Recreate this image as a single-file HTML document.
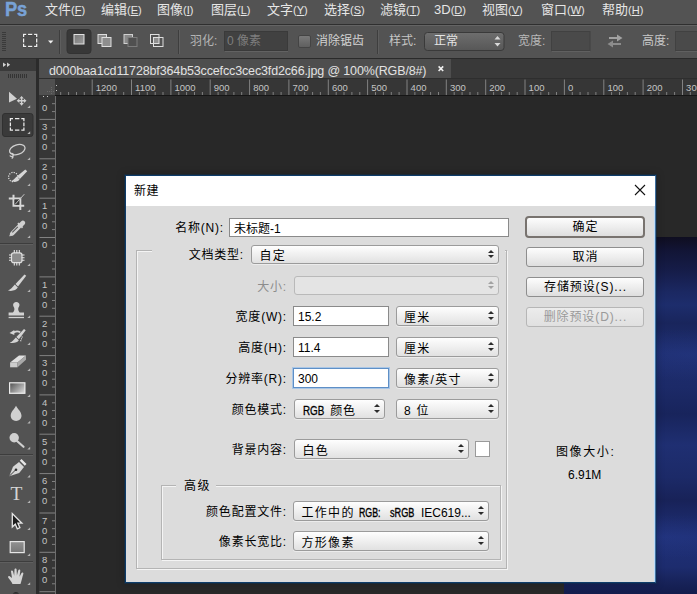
<!DOCTYPE html>
<html lang="zh-CN">
<head>
<meta charset="utf-8">
<title>新建</title>
<style>
*{box-sizing:border-box;margin:0;padding:0}
html,body{width:697px;height:594px;overflow:hidden;background:#282828}
body{position:relative;font-family:"Liberation Sans","Noto Sans CJK SC",sans-serif;font-size:12px;color:#000}
.a{position:absolute;white-space:nowrap}
/* app chrome */
#menubar{left:0;top:0;width:697px;height:24px;background:#535353}
#menubar .m{top:0.500px;font-size:13px;line-height:17px;color:#e6e6e6}
#menubar u{text-decoration:underline;text-underline-offset:1px}
#menubar .m span{font-size:11px}
#ps{left:5px;top:-3.500px;font-size:21px;font-weight:bold;color:#78a2d6;letter-spacing:-0.300px;line-height:24px;-webkit-text-stroke:0.500px #78a2d6;transform:scaleX(.87);transform-origin:0 50%}
#optbar{left:0;top:24px;width:697px;height:35px;background:#535353;border-top:1px solid #2f2f2f;border-bottom:1px solid #2c2c2c;box-shadow:inset 0 1px 0 #646464}
.ol{font-size:12px;color:#9a9a9a;line-height:16px;top:33px}
#tabbar{left:36px;top:58px;width:661px;height:21px;background:#393939;border-top:1px solid #2a2a2a}
#tab{left:39px;top:59px;width:412px;height:19px;background:#4e4e4e;color:#e2e2e2;font-size:12.500px;letter-spacing:-0.140px;line-height:19px;padding-left:10px;padding-top:2.500px;overflow:hidden}
#tools{left:0;top:59px;width:36px;height:535px;background:#535353}
#toolhd{left:0;top:59px;width:36px;height:12px;background:#3a3a3a}
#hruler{left:39px;top:78px;width:658px;height:17px;background:#363636;border-top:1px solid #2e2e2e}
#vruler{left:39px;top:95px;width:17px;height:499px;background:#363636}
#corner{left:39px;top:79px;width:16px;height:16px;background:#505050}
.rl{font-size:9.5px;color:#bdbdbd;line-height:10px}
/* dialog */
#dlg{left:125px;top:175px;width:531px;height:408px;background:#dcdcdc;border:1px solid #0e3c69;border-right-color:#41709f;box-shadow:0 0 0 1px rgba(14,50,84,.45),0 0 7px 2px rgba(0,0,0,.16)}
#dlg::after{content:"";position:absolute;right:0;top:0;width:1px;height:100%;background:#bcdcfa}
#title{left:126px;top:176px;width:529px;height:30px;background:#fff}
.lbl{font-size:12px;line-height:16px;letter-spacing:0.800px;text-align:right;color:#000}
.inp{background:#fff;border:1px solid #8a8a8a;font-size:12px;line-height:21px;padding-left:4px}
.foc{border:1px solid #5e8fc6;box-shadow:0 0 0 1px #a9c6e6}
.sel{border:1px solid #9b9b9b;border-radius:3px;background:linear-gradient(#fefefe,#e1e1e1);box-shadow:0 1px 0 #ececec;font-size:12px;line-height:20px;padding-top:1px;padding-left:7.500px;letter-spacing:1.300px}
.sel::before,.sel::after{content:"";position:absolute;right:3.700px;border-left:3px solid transparent;border-right:3px solid transparent}
.sel::before{top:4px;border-bottom:3.200px solid #2c2c2c}
.sel::after{top:9.500px;border-top:3.200px solid #2c2c2c}
.sel.h19{line-height:19px}
.sel.h19::before{top:3.500px}.sel.h19::after{top:9px}
.sel.dis{background:#e4e4e4;border-color:#b9b9b9;box-shadow:none}
.sel.dis::before{border-bottom-color:#a2a2a2}.sel.dis::after{border-top-color:#a2a2a2}
.nr{display:inline-block;vertical-align:top;letter-spacing:0}
.nr>span{display:inline-block;transform-origin:0 50%;white-space:nowrap}
.btn.def{left:525px;width:120px;height:22px;border:2px solid #78736f;border-radius:4px;line-height:18px}
.btn{border:1px solid #8e8e8e;border-radius:3px;background:linear-gradient(#fdfdfd,#dedede);font-size:12px;line-height:18px;text-align:center;letter-spacing:0.900px;text-indent:1px;left:526px;width:118px;height:20px}
</style>
</head>
<body>
<div class="a" id="canvasimg" style="left:564px;top:237px;width:133px;height:357px;background:
radial-gradient(ellipse 90px 26px at 125px 118px,rgba(40,60,140,.35),rgba(40,60,140,0) 100%),
radial-gradient(ellipse 90px 22px at 100px 300px,rgba(40,60,140,.3),rgba(40,60,140,0) 100%),
linear-gradient(#0f0e20 0,#121536 14px,#161d4a 35px,#1b2862 55px,#1d2d6c 68px,#19255c 86px,#1e2e70 116px,#1c2a68 150px,#18245c 177px,#1f2f72 208px,#1c2a68 240px,#182258 263px,#1f3078 300px,#1d2c6e 330px,#172258 346px,#131c4c 357px)"></div>

<div class="a" id="menubar">
 <div class="a" id="ps">Ps</div>
 <div class="a m" style="left:45px">文件<span>(<u>F</u>)</span></div>
 <div class="a m" style="left:101px">编辑<span>(<u>E</u>)</span></div>
 <div class="a m" style="left:157px">图像<span>(<u>I</u>)</span></div>
 <div class="a m" style="left:211px">图层<span>(<u>L</u>)</span></div>
 <div class="a m" style="left:267px">文字<span>(<u>Y</u>)</span></div>
 <div class="a m" style="left:324px">选择<span>(<u>S</u>)</span></div>
 <div class="a m" style="left:380px">滤镜<span>(<u>T</u>)</span></div>
 <div class="a m" style="left:434px">3D<span>(<u>D</u>)</span></div>
 <div class="a m" style="left:482px">视图<span>(<u>V</u>)</span></div>
 <div class="a m" style="left:541px">窗口<span>(<u>W</u>)</span></div>
 <div class="a m" style="left:602px">帮助<span>(<u>H</u>)</span></div>
</div>

<div class="a" id="optbar"></div>
<!-- options bar -->
<svg class="a" style="left:0;top:24px" width="697" height="34" viewBox="0 24 697 34">
 <g stroke="#3a3a3a" stroke-width="1">
  <path d="M2 32.5h4M2 34.5h4M2 36.5h4M2 38.5h4M2 40.5h4M2 42.5h4M2 44.5h4M2 46.5h4M2 48.5h4M2 50.5h4"/>
 </g>
 <rect x="23.600" y="34.400" width="13.100" height="12" fill="#4d4d4d"/><path d="M22.95 34.4H26.20M28.05 34.4H32.25M34.10 34.4H37.35M22.95 46.4H26.20M28.05 46.4H32.25M34.10 46.4H37.35M23.6 34.4V37.00M23.6 38.40V42.40M23.6 43.80V46.4M36.7 34.4V37.00M36.7 38.40V42.40M36.7 43.80V46.4" stroke="#2e2e2e" stroke-width="2.600" fill="none" opacity=".35"/><path d="M22.95 34.4H26.20M28.05 34.4H32.25M34.10 34.4H37.35M22.95 46.4H26.20M28.05 46.4H32.25M34.10 46.4H37.35M23.6 34.4V37.00M23.6 38.40V42.40M23.6 43.80V46.4M36.7 34.4V37.00M36.7 38.40V42.40M36.7 43.80V46.4" stroke="#efefef" stroke-width="1.300" fill="none"/>
 <path d="M48 40.5h5.4l-2.7 3z" fill="#f0f0f0"/>
 <path d="M59.5 30v24" stroke="#3e3e3e"/><path d="M60.5 30v24" stroke="#5e5e5e"/>
 <rect x="67" y="29.5" width="24" height="24" rx="3" fill="#383838" stroke="#333"/>
 <defs><linearGradient id="gsq" x1="0" y1="0" x2="1" y2="1"><stop offset="0" stop-color="#777"/><stop offset="1" stop-color="#9c9c9c"/></linearGradient></defs>
 <rect x="74" y="34.5" width="10" height="9.5" fill="url(#gsq)" stroke="#e2e2e2"/>
 <rect x="98" y="34.5" width="8.5" height="9" fill="#8a8a8a" stroke="#dedede"/>
 <rect x="102" y="37.5" width="9" height="9" fill="#8e8e8e" stroke="#dedede"/>
 <rect x="124" y="34.5" width="8.5" height="9" fill="#8a8a8a" stroke="#d0d0d0"/>
 <rect x="128" y="37.5" width="9" height="9" fill="#505050" stroke="#7c7c7c"/>
 <rect x="154" y="38" width="5" height="5.5" fill="#8e8e8e"/>
 <rect x="150.5" y="34.5" width="8.5" height="9" fill="none" stroke="#dedede"/>
 <rect x="153.5" y="37.5" width="9.5" height="9" fill="none" stroke="#dedede"/>
 <path d="M178.5 30v24" stroke="#3e3e3e"/><path d="M179.5 30v24" stroke="#5e5e5e"/>
 <rect x="224.5" y="31.5" width="63" height="19" fill="#414141" stroke="#3a3a3a"/>
 <path d="M225 51.5h63" stroke="#626262"/>
 <defs><linearGradient id="gcb" x1="0" y1="0" x2="0" y2="1"><stop offset="0" stop-color="#7a7a7a"/><stop offset="1" stop-color="#5e5e5e"/></linearGradient>
 <linearGradient id="gdd" x1="0" y1="0" x2="0" y2="1"><stop offset="0" stop-color="#6e6e6e"/><stop offset="1" stop-color="#575757"/></linearGradient></defs>
 <rect x="298.5" y="35.5" width="12" height="12" rx="1.5" fill="url(#gcb)" stroke="#444"/>
 <path d="M377.5 30v24" stroke="#3e3e3e"/><path d="M378.5 30v24" stroke="#5e5e5e"/>
 <rect x="424.5" y="32.5" width="79.5" height="18" rx="3" fill="url(#gdd)" stroke="#3a3a3a"/>
 <path d="M494.5 39.5l3-3.4 3 3.4zM494.5 43l3 3.4 3-3.400z" fill="#d8d8d8"/>
 <rect x="551.5" y="31.5" width="38.500" height="19" fill="#4a4a4a" stroke="#414141"/>
 <path d="M552 51.5h38" stroke="#606060"/>
 <rect x="675.500" y="31.5" width="30" height="19" fill="#4a4a4a" stroke="#414141"/>
 <path d="M676 51.5h30" stroke="#606060"/>
 <g fill="#a2a2a2"><path d="M609 37h8v-2.500l5.500 3.500-5.500 3.500v-2.500h-8z"/><path d="M621 43h-8v-2.500l-5.500 3.500 5.500 3.500v-2.500h8z" fill="#8c8c8c"/></g>
</svg>
<div class="a ol" style="left:190px;color:#b4b4b4">羽化:</div>
<div class="a ol" style="left:227px;color:#7e7e7e">0 像素</div>
<div class="a ol" style="left:316px;color:#d2d2d2">消除锯齿</div>
<div class="a ol" style="left:389px;color:#c6c6c6">样式:</div>
<div class="a ol" style="left:434px;color:#e4e4e4">正常</div>
<div class="a ol" style="left:518px;color:#b8b8b8">宽度:</div>
<div class="a ol" style="left:642px;color:#c8c8c8">高度:</div>

<div class="a" id="tabbar"></div>
<div class="a" id="tab">d000baa1cd11728bf364b53ccefcc3cec3fd2c66.jpg @ 100%(RGB/8#)</div>
<svg class="a" style="left:437px;top:65px" width="8" height="8" viewBox="0 0 8 8"><path d="M1.600 1.400l4.600 4.600M6.200 1.400l-4.600 4.600" stroke="#f0f0f0" stroke-width="1.600"/></svg>
<div class="a" id="tools"></div>
<div class="a" id="toolhd"></div>
<div class="a" id="hruler"></div>
<div class="a" id="vruler"></div>
<div class="a" id="corner"></div>
<svg class="a" id="rul" style="left:0;top:0" width="697" height="594" viewBox="0 0 697 594" font-family="Liberation Sans, sans-serif" font-size="9.500" fill="#c4c4c4">
<path d="M55.500 95.500V594" stroke="#6e6e6e" fill="none"/><path d="M55 95.500H697" stroke="#161616" fill="none"/>
<path d="M92.2 79.500V95M131.5 79.500V95M170.9 79.500V95M210.2 79.500V95M249.6 79.500V95M288.9 79.500V95M328.3 79.500V95M367.6 79.500V95M407.0 79.500V95M446.3 79.500V95M485.7 79.500V95M525.0 79.500V95M564.4 79.500V95M603.8 79.500V95M643.1 79.500V95M682.5 79.500V95M39.5 119.4H55M39.5 158.8H55M39.5 198.2H55M39.5 237.5H55M39.5 276.9H55M39.5 316.2H55M39.5 355.6H55M39.5 394.9H55M39.5 434.2H55M39.5 473.6H55M39.5 513.0H55M39.5 552.3H55M39.5 591.7H55" stroke="#828282" fill="none"/>
<path d="M60.7 92V95M68.6 92V95M76.5 92V95M84.3 92V95M100.1 92V95M107.9 92V95M115.8 92V95M123.7 92V95M139.4 92V95M147.3 92V95M155.2 92V95M163.0 92V95M178.8 92V95M186.6 92V95M194.5 92V95M202.4 92V95M218.1 92V95M226.0 92V95M233.9 92V95M241.7 92V95M257.5 92V95M265.3 92V95M273.2 92V95M281.1 92V95M296.8 92V95M304.7 92V95M312.6 92V95M320.4 92V95M336.2 92V95M344.0 92V95M351.9 92V95M359.8 92V95M375.5 92V95M383.4 92V95M391.3 92V95M399.1 92V95M414.9 92V95M422.7 92V95M430.6 92V95M438.5 92V95M454.2 92V95M462.1 92V95M470.0 92V95M477.8 92V95M493.6 92V95M501.4 92V95M509.3 92V95M517.2 92V95M532.9 92V95M540.8 92V95M548.7 92V95M556.5 92V95M572.3 92V95M580.1 92V95M588.0 92V95M595.9 92V95M611.6 92V95M619.5 92V95M627.4 92V95M635.2 92V95M651.0 92V95M658.8 92V95M666.7 92V95M674.6 92V95M690.3 92V95M52 103.7H55M52 111.6H55M52 127.3H55M52 135.2H55M52 143.1H55M52 150.9H55M52 166.7H55M52 174.5H55M52 182.4H55M52 190.3H55M52 206.0H55M52 213.9H55M52 221.8H55M52 229.6H55M52 245.4H55M52 253.2H55M52 261.1H55M52 269.0H55M52 284.7H55M52 292.6H55M52 300.5H55M52 308.3H55M52 324.1H55M52 331.9H55M52 339.8H55M52 347.7H55M52 363.4H55M52 371.3H55M52 379.2H55M52 387.0H55M52 402.8H55M52 410.6H55M52 418.5H55M52 426.4H55M52 442.1H55M52 450.0H55M52 457.9H55M52 465.7H55M52 481.5H55M52 489.3H55M52 497.2H55M52 505.1H55M52 520.8H55M52 528.7H55M52 536.6H55M52 544.4H55M52 560.2H55M52 568.0H55M52 575.9H55M52 583.8H55" stroke="#808080" fill="none"/>
<text x="95.8" y="91.200">1200</text>
<text x="135.1" y="91.200">1100</text>
<text x="174.5" y="91.200">1000</text>
<text x="213.8" y="91.200">900</text>
<text x="253.2" y="91.200">800</text>
<text x="292.6" y="91.200">700</text>
<text x="331.9" y="91.200">600</text>
<text x="371.2" y="91.200">500</text>
<text x="410.6" y="91.200">400</text>
<text x="449.9" y="91.200">300</text>
<text x="489.3" y="91.200">200</text>
<text x="528.6" y="91.200">100</text>
<text x="568.0" y="91.200">0</text>
<text x="607.4" y="91.200">100</text>
<text x="646.7" y="91.200">200</text>
<text x="686.1" y="91.200">300</text>
<text x="44.6" y="110.8" text-anchor="middle">0</text>
<text x="44.6" y="130.1" text-anchor="middle">3</text>
<text x="44.6" y="140.2" text-anchor="middle">0</text>
<text x="44.6" y="150.2" text-anchor="middle">0</text>
<text x="44.6" y="169.5" text-anchor="middle">2</text>
<text x="44.6" y="179.5" text-anchor="middle">0</text>
<text x="44.6" y="189.5" text-anchor="middle">0</text>
<text x="44.6" y="208.9" text-anchor="middle">1</text>
<text x="44.6" y="218.9" text-anchor="middle">0</text>
<text x="44.6" y="228.9" text-anchor="middle">0</text>
<text x="44.6" y="248.2" text-anchor="middle">0</text>
<text x="44.6" y="287.6" text-anchor="middle">1</text>
<text x="44.6" y="297.6" text-anchor="middle">0</text>
<text x="44.6" y="307.6" text-anchor="middle">0</text>
<text x="44.6" y="326.9" text-anchor="middle">2</text>
<text x="44.6" y="336.9" text-anchor="middle">0</text>
<text x="44.6" y="346.9" text-anchor="middle">0</text>
<text x="44.6" y="366.2" text-anchor="middle">3</text>
<text x="44.6" y="376.2" text-anchor="middle">0</text>
<text x="44.6" y="386.2" text-anchor="middle">0</text>
<text x="44.6" y="405.6" text-anchor="middle">4</text>
<text x="44.6" y="415.6" text-anchor="middle">0</text>
<text x="44.6" y="425.6" text-anchor="middle">0</text>
<text x="44.6" y="444.9" text-anchor="middle">5</text>
<text x="44.6" y="454.9" text-anchor="middle">0</text>
<text x="44.6" y="464.9" text-anchor="middle">0</text>
<text x="44.6" y="484.3" text-anchor="middle">6</text>
<text x="44.6" y="494.3" text-anchor="middle">0</text>
<text x="44.6" y="504.3" text-anchor="middle">0</text>
<text x="44.6" y="523.6" text-anchor="middle">7</text>
<text x="44.6" y="533.6" text-anchor="middle">0</text>
<text x="44.6" y="543.6" text-anchor="middle">0</text>
<text x="44.6" y="563.0" text-anchor="middle">8</text>
<text x="44.6" y="573.0" text-anchor="middle">0</text>
<text x="44.6" y="583.0" text-anchor="middle">0</text>
<text x="44.6" y="602.4" text-anchor="middle">9</text>
<path d="M47 91.500H55M51.500 87V95" stroke="#686868" stroke-dasharray="1 1" fill="none"/>
<path d="M56 85h1v1h-1zM56 90h1v1h-1zM43 96h1v1h-1zM47 96h1v1h-1z" fill="#c8c8c8"/>
</svg>
<svg class="a" id="toolsvg" style="left:0;top:59px" width="39" height="535" viewBox="0 59 39 535">
 <rect x="36" y="59" width="3" height="535" fill="#2b2b2b"/>
 <path d="M3 62.500l3.200 2.300-3.200 2.300zM7 62.500l3.200 2.300-3.200 2.300z" fill="#cfcfcf"/>
 <path d="M8.500 74v4M10.500 74v4M12.500 74v4M14.500 74v4M16.500 74v4M18.500 74v4M20.500 74v4M22.500 74v4M24.500 74v4M26.500 74v4" stroke="#343434"/>
 <rect x="2.500" y="113.500" width="30.500" height="23" rx="2.500" fill="#3a3a3a" stroke="#303030"/>
 <g fill="#b4b4b4"><path d="M30.200 105.2v2.900h-2.900z"/><path d="M30.200 131.2v2.900h-2.900z"/><path d="M30.200 157.2v2.900h-2.900z"/><path d="M30.200 183.2v2.900h-2.900z"/><path d="M30.200 209.2v2.900h-2.900z"/><path d="M30.200 235.2v2.900h-2.900z"/><path d="M30.200 263.2v2.900h-2.900z"/><path d="M30.200 289.2v2.900h-2.900z"/><path d="M30.200 315.2v2.900h-2.900z"/><path d="M30.200 342.2v2.900h-2.900z"/><path d="M30.200 368.2v2.900h-2.900z"/><path d="M30.200 394.2v2.900h-2.900z"/><path d="M30.200 420.7v2.900h-2.900z"/><path d="M30.200 446.7v2.900h-2.900z"/><path d="M30.200 474.7v2.900h-2.900z"/><path d="M30.200 500.2v2.900h-2.900z"/><path d="M30.200 527.2v2.900h-2.900z"/><path d="M30.200 553.2v2.900h-2.900z"/><path d="M30.200 582.2v2.900h-2.900z"/></g>
 <!-- separators -->
 <path d="M0 243.500h33M0 454.500h33M0 561.500h33" stroke="#3d3d3d"/><path d="M0 244.500h33M0 455.500h33M0 562.500h33" stroke="#5f5f5f"/>
 <g fill="#d0d0d0" stroke="none">
  <!-- move -->
  <path d="M9 91.800v10.700l8-3.800z"/>
  <path d="M21.600 96l2.200 2.600h-1.500v1.500h1.600v-1.500l2.600 2.200-2.600 2.200v-1.500h-1.600v1.600h1.500l-2.200 2.600-2.200-2.600h1.500v-1.600h-1.600v1.500l-2.600-2.200 2.600-2.200v1.500h1.600v-1.500h-1.500z"/>
 </g>
 <!-- marquee -->
 <path d="M9.75 118.7H13.00M14.95 118.7H19.35M21.30 118.7H24.55M9.75 130H13.00M14.95 130H19.35M21.30 130H24.55M10.4 118.7V121.30M10.4 122.55V126.15M10.4 127.40V130M23.9 118.7V121.30M23.9 122.55V126.15M23.9 127.40V130" stroke="#ececec" stroke-width="1.250" fill="none"/>
 <!-- lasso -->
 <g fill="none" stroke="#d0d0d0" stroke-width="1.300">
  <ellipse cx="17.300" cy="149.600" rx="8" ry="4.800" transform="rotate(-18 17.300 149.600)"/>
  <path d="M10.500 153.500c2.500-.8 3.500 1 2.500 2.300s-3 .700-2.800-.5M12.500 155.500c.800 1 .6 2.300-.8 3"/>
 </g>
 <!-- quick select -->
 <circle cx="13.200" cy="177" r="4.600" fill="none" stroke="#e0e0e0" stroke-width="1.200" stroke-dasharray="1.200 1.200"/>
 <path d="M27.200 171.200l-1.900-1.700-8.300 6.700 2.800 2.800z" fill="#d6d6d6"/>
 <path d="M16.600 176.400l3 3c-1.500 2.600-5.800 3-8.800 1.700 2.600-.8 3.800-2.700 5.800-4.700z" fill="#d6d6d6"/>
 <!-- crop -->
 <path d="M8.800 198.500h11.500v11.500M13.500 194.800v11h10.700" fill="none" stroke="#d8d8d8" stroke-width="2"/>
 <rect x="14.500" y="199.500" width="4.800" height="5.300" fill="#3a3a3a"/><path d="M15 204.500l9.300-10.300" stroke="#c4c4c4" stroke-width="1"/>
 <!-- eyedropper -->
 <path d="M24.500 221.200c1 1 .9 2.300 0 3.200l-2 2 .7.700-1.300 1.300-.8-.8-7.300 7.300c-.8.800-2.200 1.200-3 .9l-.9.700-.7-.7.700-.9c-.3-.8.100-2.200.9-3l7.300-7.300-.8-.8 1.300-1.300.7.700 2-2c.9-.9 2.200-1 3.200 0z" fill="#d0d0d0"/>
 <path d="M12.300 232.300l5.500-5.500" stroke="#555" stroke-width="1.100"/>
 <!-- healing -->
 <rect x="11.500" y="252.800" width="10.500" height="9.800" rx="2.200" fill="#8c8c8c" stroke="#dcdcdc" stroke-width="1.200"/>
 <path d="M14.300 250v3M16.800 250v3M19.300 250v3M14.300 262.500v3M16.800 262.500v3M19.300 262.500v3M9 255h3M9 257.700h3M9 260.300h3M21.500 255h3M21.500 257.700h3M21.500 260.300h3" stroke="#e4e4e4" stroke-width="1.100"/>
 <!-- brush -->
 <path d="M26.200 275.800l-1.700-1.400-9 9.600 2.500 2.400z" fill="#d4d4d4"/>
 <path d="M14.800 284.600l3 3c-1.200 2.600-6 4-9.800 2.900 2.700-.7 4.300-3.400 6.800-5.900z" fill="#d4d4d4"/>
 <!-- stamp -->
 <path d="M16.300 302c2 0 3.200 1.400 3.200 3 0 1.500-1.300 2.300-1.300 4 0 1.200.5 2.500 1.500 3.500h4.300v3h-15.400v-3h4.300c1-1 1.500-2.300 1.500-3.500 0-1.700-1.300-2.500-1.300-4 0-1.600 1.200-3 3.200-3z" fill="#d2d2d2"/>
 <path d="M8.600 317.500h15.400" stroke="#d2d2d2" stroke-width="1.300"/>
 <!-- history brush -->
 <path d="M25.700 330.300l-1.700-1.400-7.600 8 2.500 2.300z" fill="#d4d4d4"/>
 <path d="M15.800 337.400l3 2.900c-1.200 2.300-5.400 3.200-9.200 2.400 2.600-.7 3.900-3 6.200-5.300z" fill="#d4d4d4"/>
 <path d="M12.500 333.500c2.300-2.300 5.500-2.500 7.800-1.200" fill="none" stroke="#d4d4d4" stroke-width="1.700"/>
 <path d="M9.500 333l4.800-3v5z" fill="#d4d4d4"/>
 <path d="M22.300 336.500l-1.800 5" stroke="#e8e8e8" stroke-width="1.100" stroke-dasharray="1 1"/>
 <!-- eraser -->
 <path d="M10.100 362.500l8.900-7h7l-8.500 7z" fill="#e0e0e0"/>
 <path d="M10.100 362.500h7.400v4.800h-7.400z" fill="#cdcdcd"/>
 <path d="M17.500 362.500l8.500-7v4.300l-8.500 7.500z" fill="#a8a8a8"/>
 <!-- gradient -->
 <defs><linearGradient id="tg1" x1="0" y1="0" x2="1" y2="0.700"><stop offset="0" stop-color="#4e4e4e"/><stop offset="1" stop-color="#cfcfcf"/></linearGradient>
 <linearGradient id="tg2" x1="0" y1="0" x2="0" y2="1"><stop offset="0" stop-color="#929292"/><stop offset="1" stop-color="#767676"/></linearGradient></defs>
 <rect x="9.600" y="382.800" width="15.300" height="10.500" fill="url(#tg1)" stroke="#ececec" stroke-width="1.200"/>
 <!-- blur drop -->
 <path d="M16 405.800c1.800 3.300 5.500 6.300 5.500 10 0 3-2.400 5.200-5.400 5.200s-5.400-2.200-5.400-5.200c0-3.700 3.600-6.700 5.300-10z" fill="#d0d0d0"/>
 <!-- dodge -->
 <circle cx="14.200" cy="437.800" r="4.700" fill="#d0d0d0"/>
 <path d="M17 441l6.500 5.800" stroke="#d0d0d0" stroke-width="2.200" stroke-linecap="round"/>
 <!-- pen -->
 <path d="M9.200 476.300l3.800-9.500 6-4.800 5 5-4.800 6z" fill="#d6d6d6"/>
 <path d="M19.800 460.800l1.700-1.700 5 5-1.700 1.700z" fill="#e6e6e6"/>
 <path d="M9.600 475.900l6-6" stroke="#3c3c3c" stroke-width="1"/>
 <circle cx="16" cy="469.700" r="1.300" fill="#2e2e2e"/>
 <!-- path select arrow -->
 <path d="M12.300 513.500v13.500l3-2.800 2 4.600 2.600-1.100-2-4.500h4z" fill="#1e1e1e" stroke="#e6e6e6" stroke-width="1.300" stroke-linejoin="miter"/>
 <!-- rect shape -->
 <rect x="10.200" y="541.600" width="14" height="11" fill="url(#tg2)" stroke="#e6e6e6" stroke-width="1.200"/>
 <!-- hand -->
 <path d="M12.500 584c-1-2.500-2.700-4.500-4.200-6.300-.7-1 .3-2 1.400-1.400l2.300 1.800-1-6.500c-.2-1.300 1.600-1.700 2-.4l1.200 4.500.3-6.200c.1-1.400 2-1.400 2.100 0l.3 6 1.400-5.200c.4-1.300 2.200-.9 2 .4l-.8 6 2-3.600c.700-1.200 2.300-.4 1.800.9-1 2.800-1.500 6.500-2.800 10z" fill="#d4d4d4"/>
 <path d="M12.800 593.800a3.500 3.500 0 0 1 6.200 0z" fill="#2a2a2a"/>
</svg>
<div class="a" style="left:10.500px;top:484px;font-family:'Liberation Serif',serif;font-size:19.500px;line-height:20px;color:#d4d4d4">T</div>


<div class="a" id="dlg"></div>
<div class="a" id="title"></div>
<div class="a" style="left:134px;top:183px;font-size:12px;line-height:16px;letter-spacing:.5px">新建</div>
<svg class="a" style="left:633px;top:183px" width="14" height="14" viewBox="0 0 14 14"><path d="M2 2l10 10M12 2l-10 10" stroke="#111" stroke-width="1.100"/></svg>

<div class="a lbl" style="left:140px;width:84px;top:220px">名称(N):</div>
<div class="a inp" style="left:229px;top:218px;width:280px;height:19px;line-height:20px">未标题-1</div>

<div class="a btn def" style="top:216px">确定</div>
<div class="a btn" style="top:247px">取消</div>
<div class="a btn" style="top:277px">存储预设(S)...</div>
<div class="a btn" style="top:307px;color:#9a9a9a;border-color:#b6b6b6;background:linear-gradient(#ececec,#e0e0e0)">删除预设(D)...</div>


<!-- fieldset outer -->
<div class="a" style="left:136px;top:250px;width:371px;height:319px;border:1px solid #b4b4b4;box-shadow:1px 1px 0 #f4f4f4, inset 1px 1px 0 #f4f4f4"></div>
<div class="a" style="left:152px;top:246px;width:353px;height:10px;background:#dcdcdc"></div>
<div class="a lbl" style="left:150px;width:94px;top:247px">文档类型:</div>
<div class="a sel h19" style="left:251px;top:245px;width:247.500px;height:19px">自定</div>

<div class="a lbl" style="left:200px;width:87px;top:279px;color:#8c8c8c">大小:</div>
<div class="a sel dis h19" style="left:294px;top:276px;width:204.500px;height:19px"></div>

<div class="a lbl" style="left:200px;width:87px;top:309px">宽度(W):</div>
<div class="a inp" style="left:293px;top:306px;width:96px;height:20px">15.2</div>
<div class="a sel" style="left:395.500px;top:306px;width:103px;height:20px">厘米</div>

<div class="a lbl" style="left:200px;width:87px;top:340px">高度(H):</div>
<div class="a inp" style="left:293px;top:337px;width:96px;height:20px">11.4</div>
<div class="a sel" style="left:395.500px;top:337px;width:103px;height:20px">厘米</div>

<div class="a lbl" style="left:200px;width:87px;top:371px">分辨率(R):</div>
<div class="a inp foc" style="left:293px;top:368px;width:96px;height:20px">300</div>
<div class="a sel" style="left:395.500px;top:368px;width:103px;height:20px">像素/英寸</div>

<div class="a lbl" style="left:200px;width:87px;top:402px">颜色模式:</div>
<div class="a sel" style="left:294px;top:399px;width:91px;height:20px"><span class="nr" style="width:21.300px"><span style="transform:scaleX(.82);-webkit-text-stroke:.3px #000">RGB</span></span><span style="margin-left:6.500px;letter-spacing:.8px">颜色</span></div>
<div class="a sel" style="left:395.500px;top:399px;width:103px;height:20px">8 位</div>

<div class="a lbl" style="left:200px;width:87px;top:442px">背景内容:</div>
<div class="a sel" style="left:294px;top:439px;width:175px;height:20px">白色</div>
<div class="a" style="left:475px;top:441px;width:15px;height:16px;background:#fff;border:1px solid #9a9a9a"></div>

<!-- advanced fieldset -->
<div class="a" style="left:161px;top:485px;width:340px;height:75px;border:1px solid #b4b4b4;box-shadow:1px 1px 0 #f4f4f4, inset 1px 1px 0 #f4f4f4"></div>
<div class="a" style="left:176px;top:481px;width:40px;height:10px;background:#dcdcdc"></div>
<div class="a lbl" style="left:184px;top:478px;text-align:left;letter-spacing:1.500px">高级</div>

<div class="a lbl" style="left:190px;width:97px;top:504px">颜色配置文件:</div>
<div class="a sel" style="left:293px;top:501px;width:196px;height:20px">工作中的<span class="nr" style="width:21.500px;margin-left:4.600px"><span style="transform:scaleX(.735);-webkit-text-stroke:.35px #000">RGB:</span></span><span class="nr" style="width:24.300px;margin-left:9.400px"><span style="transform:scaleX(.76);-webkit-text-stroke:.35px #000">sRGB</span></span><span class="nr" style="width:50px;margin-left:6.400px"><span>IEC619...</span></span></div>
<div class="a lbl" style="left:190px;width:97px;top:534px">像素长宽比:</div>
<div class="a sel" style="left:293px;top:531px;width:196px;height:20px">方形像素</div>

<div class="a lbl" style="left:556px;top:444px;text-align:left;letter-spacing:1.600px">图像大小:</div>
<div class="a lbl" style="left:568px;top:467px;text-align:left;letter-spacing:0">6.91M</div>
</body>
</html>
